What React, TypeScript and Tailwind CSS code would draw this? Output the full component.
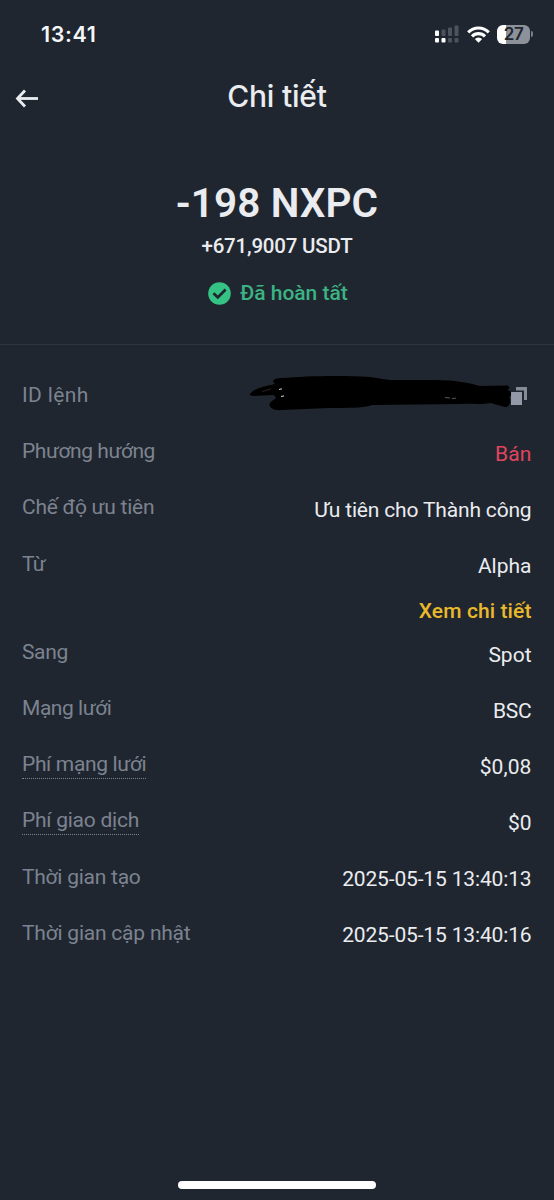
import React from "react";

type Row = {
  label: string;
  labelClass: string;
  value?: string;
  valueClass?: string;
  dotted?: boolean;
  link?: string;
};

const rows: Row[] = [
  { label: "ID lệnh", labelClass: "tracking-[0.35px]" },
  { label: "Phương hướng", labelClass: "tracking-[-0.45px]", value: "Bán", valueClass: "tracking-[0.1px] text-[#e0455f]" },
  { label: "Chế độ ưu tiên", labelClass: "tracking-[-0.25px]", value: "Ưu tiên cho Thành công", valueClass: "tracking-[-0.17px] text-[#eaecef]" },
  { label: "Từ", labelClass: "tracking-[-0.8px]", value: "Alpha", valueClass: "text-[#eaecef]", link: "Xem chi tiết" },
  { label: "Sang", labelClass: "tracking-[-0.35px]", value: "Spot", valueClass: "text-[#eaecef]" },
  { label: "Mạng lưới", labelClass: "tracking-[-0.45px]", value: "BSC", valueClass: "tracking-[-0.2px] text-[#eaecef]" },
  { label: "Phí mạng lưới", labelClass: "tracking-[-0.35px]", value: "$0,08", valueClass: "tracking-[0.1px] text-[#eaecef]", dotted: true },
  { label: "Phí giao dịch", labelClass: "tracking-[-0.25px]", value: "$0", valueClass: "text-[#eaecef]", dotted: true },
  { label: "Thời gian tạo", labelClass: "tracking-[-0.25px]", value: "2025-05-15 13:40:13", valueClass: "tracking-[-0.15px] text-[#eaecef]" },
  { label: "Thời gian cập nhật", labelClass: "tracking-[-0.22px]", value: "2025-05-15 13:40:16", valueClass: "tracking-[-0.15px] text-[#eaecef]" },
];

function StatusBar() {
  return (
    <div className="flex h-[68px] items-center justify-between pl-[41px] pr-[21px] font-['Inter',sans-serif]">
      <span className="pt-px text-[21.5px] font-semibold leading-none tracking-[0.6px] text-[#f4f5f8]">13:41</span>
      <div className="flex items-center">
        <svg width="25" height="18" viewBox="0 0 25 18">
          <g fill="#fff">
            <rect x="0" y="5.5" width="4" height="5.5" rx="1" />
            <rect x="0" y="13" width="4" height="4.5" rx="1" />
            <rect x="6.5" y="13" width="4" height="4.5" rx="1" />
          </g>
          <g fill="#4d535d">
            <rect x="6.5" y="4.5" width="4" height="6.5" rx="1" />
            <rect x="13" y="2.5" width="4" height="8.5" rx="1" />
            <rect x="19.5" y="0.5" width="4" height="10.5" rx="1" />
            <rect x="13" y="13" width="4" height="4.5" rx="1" />
            <rect x="19.5" y="13" width="4" height="4.5" rx="1" />
          </g>
        </svg>
        <svg className="ml-[7px]" width="23" height="17" viewBox="0 0 23 17">
          <g fill="none" stroke="#fff" strokeWidth="3.1">
            <path d="M1.2 6.3a14.6 14.6 0 0 1 20.6 0" />
            <path d="M5 10.3a9.2 9.2 0 0 1 13 0" />
          </g>
          <path d="M11.5 16.8l-3.7-3.9a5.3 5.3 0 0 1 7.4 0z" fill="#fff" />
        </svg>
        <div className="ml-[7px] flex h-[19px] w-[33px] items-center justify-center rounded-[6px] bg-[linear-gradient(90deg,#fff_0_9px,#8d9199_9px)]">
          <span className="text-[17px] font-semibold leading-none tracking-[-0.5px] text-[#20262f]">27</span>
        </div>
        <div className="ml-[1px] h-[6px] w-[2px] rounded-r-full bg-[#7b8088]" />
      </div>
    </div>
  );
}

function Scribble() {
  return (
    <svg width="283" height="40" viewBox="0 0 283 40" className="block">
      <path d="M4 18C8 14 18 12 27 10C22 6 28 4 34 4C56 2 95 1 122 3C132 4 137 6 146 6L188 6C206 6 222 9 232 12L259 11.500C262 12 262 15 259 16C264 17 265 21 261 23C264 27 261 34 257 33C252 32 247 30 243 29C230 31 222 29 214 30L124 31C117 34 100 34 80 34L34 36C25 37 20 33 22 29C23 27 26 26 28 24L26 21L5 22C1 22 1 20 4 18Z" fill="#000" />
      <path d="M14 17.500l9-2.600" stroke="#2a2322" strokeWidth="1" />
      <path d="M31 15.500l3-.7M33 22.500l3-.6" stroke="#d8d8d8" strokeWidth="1" />
      <path d="M197 23.500l5 .5M204 24.500l4-.3" stroke="#55585e" strokeWidth="1" />
      <path d="M263 18h11v13h-11z" fill="#929aa8" />
      <path d="M268 13h11v13h-3v-9.500h-8z" fill="#858c98" />
      <path d="M255 17C264 16 266 21 259 23z" fill="#000" />
    </svg>
  );
}

function DetailRow({ row }: { row: Row }) {
  return (
    <div className={row.link ? "flex h-[88.500px] items-start justify-between" : "flex h-[56.150px] items-start justify-between"}>
      <span
        className={`${row.labelClass} whitespace-nowrap text-[21px] leading-[28px] text-[#7c8390] ${
          row.dotted ? "border-b border-dotted border-[#7c8390]" : ""
        }`}
      >
        {row.label}
      </span>
      {row.value ? (
        <div className="flex flex-col items-end pt-[2.500px] text-[21px] leading-[28px]">
          <span className={`${row.valueClass} whitespace-nowrap`}>{row.value}</span>
          {row.link && (
            <span className="mt-[17px] whitespace-nowrap font-medium tracking-[0.1px] text-[#e9b92b]">{row.link}</span>
          )}
        </div>
      ) : (
        <div className="mr-px -mt-[7px]">
          <Scribble />
        </div>
      )}
    </div>
  );
}

export default function App() {
  return (
    <div className="flex h-[1200px] w-[554px] flex-col bg-[#20262f] font-['Roboto',sans-serif]">
      <StatusBar />
      <header className="grid h-[60px] grid-cols-[60px_1fr_60px] items-center">
        <svg className="ml-[15px]" width="24" height="20" viewBox="0 0 24 20" fill="none" stroke="#eaecef" strokeWidth="2.8">
          <path d="M23 10.500H3" />
          <path d="M10 2.500L2.500 10.500L10 18.500" />
        </svg>
        <h1 className="-mt-[5px] text-center font-['Inter',sans-serif] text-[30px] font-medium leading-none tracking-[-0.2px] text-[#eaecef]">Chi tiết</h1>
      </header>
      <section className="flex h-[217px] flex-col items-center border-b border-[#30363f] pt-[50px]">
        <div className="text-[40.500px] font-semibold leading-[50px] tracking-[0.1px] text-[#eaecef]">-198 NXPC</div>
        <div className="mt-[5px] text-[20.500px] font-medium leading-[26px] tracking-[-0.2px] text-[#eaecef]">+671,9007 USDT</div>
        <div className="mt-[20px] flex items-center gap-[9px] pl-[2px]">
          <svg width="23" height="23" viewBox="0 0 23 23">
            <circle cx="11.500" cy="11.500" r="11.300" fill="#34c385" />
            <path d="M5.500 11.200l4.300 4.200 7.800-7.800" fill="none" stroke="#20262f" strokeWidth="2.8" />
          </svg>
          <span className="text-[21px] font-medium leading-[28px] text-[#3bb383]">Đã hoàn tất</span>
        </div>
      </section>
      <section className="flex flex-1 flex-col pl-[22px] pr-[22.500px] pt-[36.100px]">
        {rows.map((row) => (
          <DetailRow key={row.label} row={row} />
        ))}
      </section>
      <div className="mx-auto mb-[11px] h-[8px] w-[198px] rounded-full bg-white" />
    </div>
  );
}
